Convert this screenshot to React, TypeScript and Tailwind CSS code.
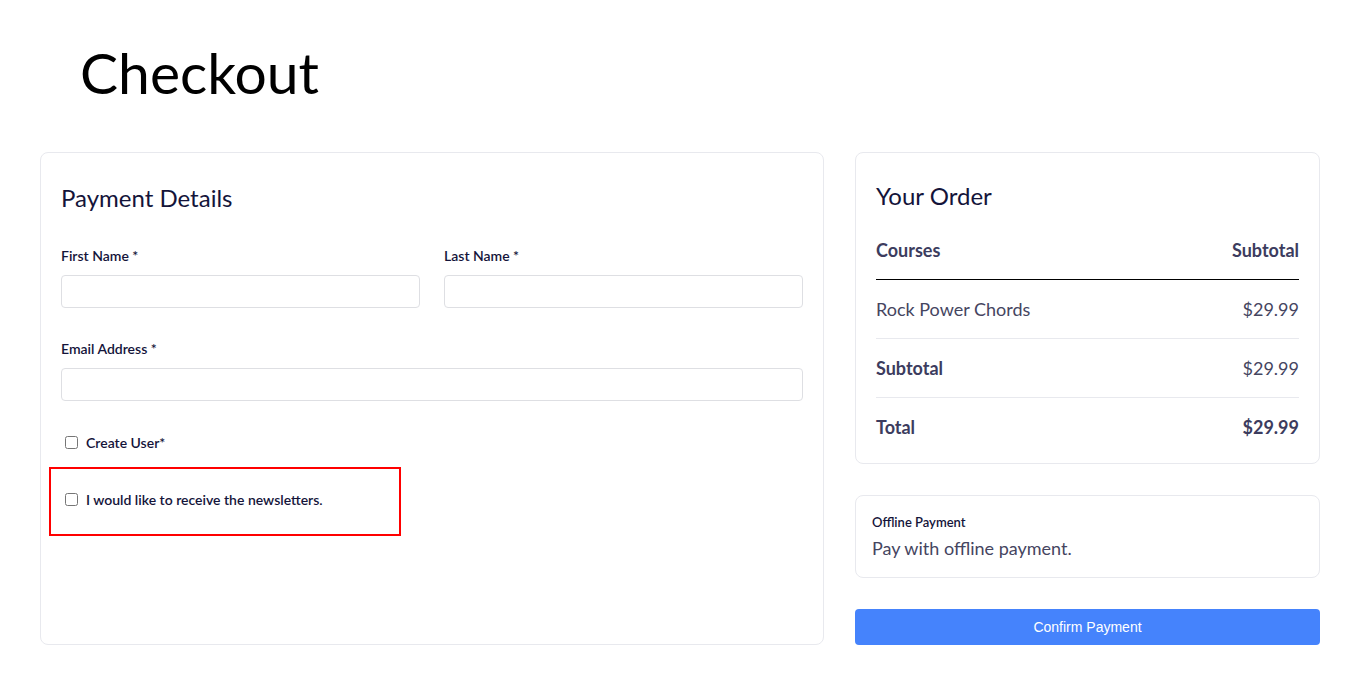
import { useState } from "react";

const font = { fontFamily: '"Segoe UI", Lato, "Noto Sans", sans-serif' };

function Field({ label, className = "" }: { label: string; className?: string }) {
  return (
    <div className={className}>
      <label className="block text-[14px] font-semibold text-[#14143a] leading-none">{label}</label>
      <input
        type="text"
        className="mt-[12px] block h-[33px] w-full rounded-[4px] border border-[#dedfe3] bg-white px-3 text-sm outline-none"
      />
    </div>
  );
}

function Check({ label }: { label: string }) {
  const [checked, setChecked] = useState(false);
  return (
    <label className="flex items-center gap-[8px] text-[14px] font-semibold text-[#14143a]">
      <input
        type="checkbox"
        checked={checked}
        onChange={() => setChecked(!checked)}
        className="h-[13px] w-[13px]"
      />
      {label}
    </label>
  );
}

function OrderRow({ left, right, bold, boldRight }: { left: string; right: string; bold?: boolean; boldRight?: boolean }) {
  return (
    <div className="flex h-[59px] items-center justify-between border-b border-[#e8e9ee] text-[18px] text-[#45455f] last:border-b-0">
      <span className={bold ? "font-bold text-[#3c3c5e]" : "font-normal"}>{left}</span>
      <span className={boldRight ? "font-bold text-[#3c3c5e]" : "font-normal"}>{right}</span>
    </div>
  );
}

export default function App() {
  return (
    <div className="min-h-screen bg-white px-10 pb-[49px] text-[#14143a]" style={font}>
      <h1 className="ml-10 pt-[34px] pb-[42px] text-[57px] leading-[76px] font-normal text-black">Checkout</h1>

      <div className="grid grid-cols-[784px_1fr] gap-[31px]">
        <div className="rounded-lg border border-[#e8e9ee] px-5 pt-[29px]">
          <h2 className="text-[24px] leading-[32px] font-normal">Payment Details</h2>

          <div className="mt-[35px] grid grid-cols-2 gap-6">
            <Field label="First Name *" />
            <Field label="Last Name *" />
          </div>
          <Field label="Email Address *" className="mt-[34px]" />

          <div className="mt-[31px] pl-1">
            <Check label="Create User*" />
          </div>
          <div className="relative mt-[14px] -ml-3 w-[352px] border-2 border-[#ff0000] pt-[20px] pb-[24px] pl-[14px]">
            <Check label="I would like to receive the newsletters." />
          </div>
        </div>

        <div className="flex flex-col">
          <div className="rounded-lg border border-[#e8e9ee] px-5 pt-[27px] pb-[6px]">
            <h2 className="text-[24px] leading-[32px] font-normal">Your Order</h2>
            <div className="mt-[25px] flex items-center justify-between border-b border-black pb-[15px] text-[18px] font-bold text-[#3c3c5e]">
              <span>Courses</span>
              <span>Subtotal</span>
            </div>
            <OrderRow left="Rock Power Chords" right="$29.99" />
            <OrderRow left="Subtotal" right="$29.99" bold />
            <OrderRow left="Total" right="$29.99" bold boldRight />
          </div>

          <div className="mt-[31px] rounded-lg border border-[#e8e9ee] px-4 pt-[20px] pb-[18px]">
            <div className="text-[13px] font-semibold leading-none">Offline Payment</div>
            <div className="mt-[8px] text-[18px] leading-[22px] text-[#45455f]">Pay with offline payment.</div>
          </div>

          <button
            className="mt-[31px] h-[36px] w-full rounded-[4px] bg-[#4583fc] text-[14px] text-white"
            style={{ fontFamily: '"Liberation Sans", Arial, sans-serif' }}
          >
            Confirm Payment
          </button>
        </div>
      </div>
    </div>
  );
}
